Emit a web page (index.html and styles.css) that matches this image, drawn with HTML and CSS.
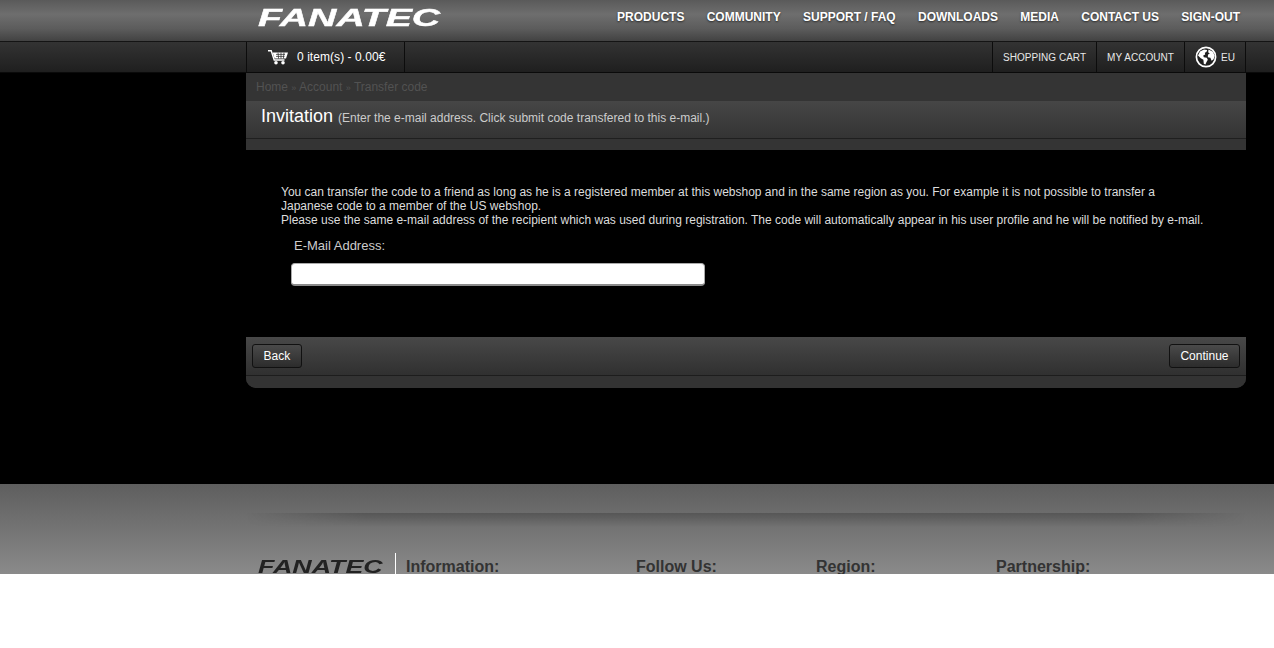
FILE: index.html
```html
<!DOCTYPE html>
<html lang="en">
<head>
<meta charset="utf-8">
<title>Fanatec - Transfer code</title>
<link rel="stylesheet" href="styles.css">
</head>
<body>
<div class="page">
  <header class="topbar">
    <div class="wrap topbar-inner">
      <a class="logo" href="#"><span class="logo-text">FANATEC</span></a>
      <nav class="nav">
        <a href="#">PRODUCTS</a><a href="#">COMMUNITY</a><a href="#">SUPPORT / FAQ</a><a href="#">DOWNLOADS</a><a href="#">MEDIA</a><a href="#">CONTACT US</a><a href="#">SIGN-OUT</a>
      </nav>
    </div>
  </header>
  <div class="subbar">
    <div class="wrap subbar-inner">
      <div class="cart">
        <svg class="cart-icon" width="20" height="15" viewBox="0 0 20 15"><path d="M0 .8h3.2l3 9.2h10.3" fill="none" stroke="#fff" stroke-width="1.4"/><path d="M4.6 2.6H20l-2 6H6.6z" fill="#fff"/><path d="M8 4.4h9M8 6.4h8.5M10 2.6l.6 6M13 2.6v6M16 2.6l-.6 6" stroke="#222" stroke-width=".7"/><circle cx="8" cy="12.8" r="1.8" fill="#fff"/><circle cx="15" cy="12.8" r="1.8" fill="#fff"/></svg>
        <span>0 item(s) - 0.00€</span>
      </div>
      <div class="sublinks">
        <a href="#">SHOPPING CART</a>
        <a href="#">MY ACCOUNT</a>
        <a class="region" href="#"><svg width="22" height="22" viewBox="0 0 22 22"><circle cx="11" cy="11" r="9.6" fill="#1f1f1f" stroke="#fff" stroke-width="1.7"/><path d="M5 5.5 9 3.4l3.2.6-.8 2-1.6.8.4 1.6-2 1.2.6 1.6 3 .6 1 2-1.4 2.4-1 2.2-1.6-.6-.4-4-2.6-1.6L3 9.5z" fill="#fff"/><path d="M13.5 3.4l4.5 2.4 1.6 4-1 3.4-2 1.6-1.2-3-2.6-.6.2-2.6 1.8-.8-1.6-1.6z" fill="#fff"/></svg><span>EU</span></a>
      </div>
    </div>
  </div>
  <main class="wrap panel">
    <div class="crumbs"><a href="#">Home</a> <small>»</small> <a href="#">Account</a> <small>»</small> <a href="#">Transfer code</a></div>
    <div class="title"><h1>Invitation</h1> <span>(Enter the e-mail address. Click submit code transfered to this e-mail.)</span></div>
    <div class="title-foot"></div>
    <div class="content">
      <p>You can transfer the code to a friend as long as he is a registered member at this webshop and in the same region as you. For example it is not possible to transfer a Japanese code to a member of the US webshop.<br>Please use the same e-mail address of the recipient which was used during registration. The code will automatically appear in his user profile and he will be notified by e-mail.</p>
      <label class="field-label" for="email">E-Mail Address:</label>
      <input class="field" id="email" type="text">
    </div>
    <div class="actions">
      <a class="btn" href="#">Back</a>
      <a class="btn" href="#">Continue</a>
    </div>
    <div class="panel-foot"></div>
  </main>
  <footer class="footer">
    <div class="wrap">
      <div class="shadow"></div>
      <div class="foot-row">
        <div class="foot-logo"><span class="foot-logo-text">FANATEC</span></div>
        <h3 class="col-info">Information:</h3>
        <h3 class="col-follow">Follow Us:</h3>
        <h3 class="col-region">Region:</h3>
        <h3>Partnership:</h3>
      </div>
    </div>
  </footer>
</div>
</body>
</html>
```
FILE: styles.css
```css
* { box-sizing: border-box; }
html, body { margin: 0; padding: 0; background: #fff; }
body { font-family: "Liberation Sans", Arial, sans-serif; font-size: 12px; overflow: hidden; }
a { color: inherit; text-decoration: none; }
.page { height: 574px; overflow: hidden; background: #000; display: flex; flex-direction: column; }
.wrap { width: 1000px; margin-left: 246px; }

.topbar { height: 42px; flex: none; background: linear-gradient(#5a5a5a 0, #6e6e6e 35%, #5c5c5c 70%, #424242 100%); border-bottom: 1px solid #141414; }
.topbar-inner { display: flex; justify-content: space-between; align-items: flex-start; height: 41px; }
.logo { display: block; margin: 4px 0 0 12px; width: 190px; height: 28px; }
.logo-text { display: inline-block; font-size: 24px; font-style: italic; font-weight: 700; line-height: 28px; color: #fff; -webkit-text-stroke: .4px #fff; transform: scaleX(1.633); transform-origin: 0 50%; }
.nav { display: flex; gap: 22.3px; padding: 10px 6px 0 0; font-weight: 700; line-height: 14px; color: #fff; text-shadow: 0 1px 2px rgba(0, 0, 0, .6); }

.subbar { height: 31px; flex: none; background: linear-gradient(#333 0, #1f1f1f 100%); border-bottom: 1px solid #0a0a0a; }
.subbar-inner { display: flex; justify-content: space-between; height: 30px; color: #fff; }
.cart { width: 159px; display: flex; align-items: center; gap: 9px; padding-left: 21px; border-left: 1px solid #0c0c0c; border-right: 1px solid #0c0c0c; letter-spacing: .06px; }
.cart-icon { display: block; margin-top: 1px; }
.sublinks { display: flex; border-right: 1px solid #0c0c0c; font-size: 10px; color: #e8e8e8; letter-spacing: .04px; }
.sublinks a { display: flex; align-items: center; padding: 0 10px; border-left: 1px solid #0c0c0c; }
.sublinks .region { width: 61px; padding: 0 0 0 10px; gap: 4px; font-size: 10px; }

.panel { flex: none; height: 315px; background: #333; border-radius: 0 0 10px 10px; overflow: hidden; }
.crumbs { height: 28px; padding: 7px 10px 0; line-height: 14px; color: #525252; background: #343434; }
.crumbs small { font-size: 9px; }
.title { height: 38px; padding: 4px 15px 0; background: linear-gradient(#464646, #343434); border-bottom: 1px solid #1f1f1f; color: #ccc; display: flex; align-items: baseline; gap: 5px; }
.title h1 { margin: 0; font-size: 18px; font-weight: 400; line-height: 22px; color: #fff; }
.title-foot { height: 11px; background: #343434; }
.content { height: 187px; background: #000; padding: 35px 35px 0; color: #ddd; }
.content p { margin: 0; width: 925px; line-height: 14px; }
.field-label { display: block; margin: 11px 0 0 13px; font-size: 13px; line-height: 16px; color: #ccc; }
.field { display: block; width: 414px; height: 23px; margin: 9px 0 0 10px; padding: 0 6px; background: #fff; border: 1px solid #aaa; border-bottom: 2px solid #8a8a8a; border-radius: 4px; outline: 0; }
.actions { height: 39px; display: flex; justify-content: space-between; align-items: flex-start; padding: 7px 6px 0; background: linear-gradient(#484848, #303030); border-bottom: 1px solid #1d1d1d; }
.btn { display: block; height: 24px; padding: 0 10.5px; line-height: 22px; color: #fff; background: linear-gradient(#4a4a4a, #2c2c2c); border: 1px solid #111; border-radius: 3px; }
.panel-foot { height: 12px; background: #333; }

.footer { flex: none; height: 90px; margin-top: 96px; background: linear-gradient(#5e5e5e, #8a8a8a); }
.shadow { height: 14px; margin-top: 29px; background: linear-gradient(rgba(0, 0, 0, .2), rgba(0, 0, 0, 0)); -webkit-mask-image: linear-gradient(90deg, transparent, #000 12%, #000 88%, transparent); mask-image: linear-gradient(90deg, transparent, #000 12%, #000 88%, transparent); }
.foot-row { display: flex; align-items: flex-start; margin-top: 26px; height: 40px; padding-left: 12px; }
.foot-logo { width: 138px; height: 40px; padding-top: 7px; margin-right: 10px; border-right: 1px solid #fff; }
.foot-logo-text { display: block; width: 86px; font-size: 18px; font-style: italic; font-weight: 700; line-height: 14px; color: #222; transform: scaleX(1.49); transform-origin: 0 50%; }
.foot-row h3 { margin: 5px 0 0; font-size: 16px; line-height: 18px; font-weight: 700; color: #333; }
.foot-row .col-info { width: 230px; }
.foot-row .col-follow { width: 180px; }
.foot-row .col-region { width: 180px; }
```
